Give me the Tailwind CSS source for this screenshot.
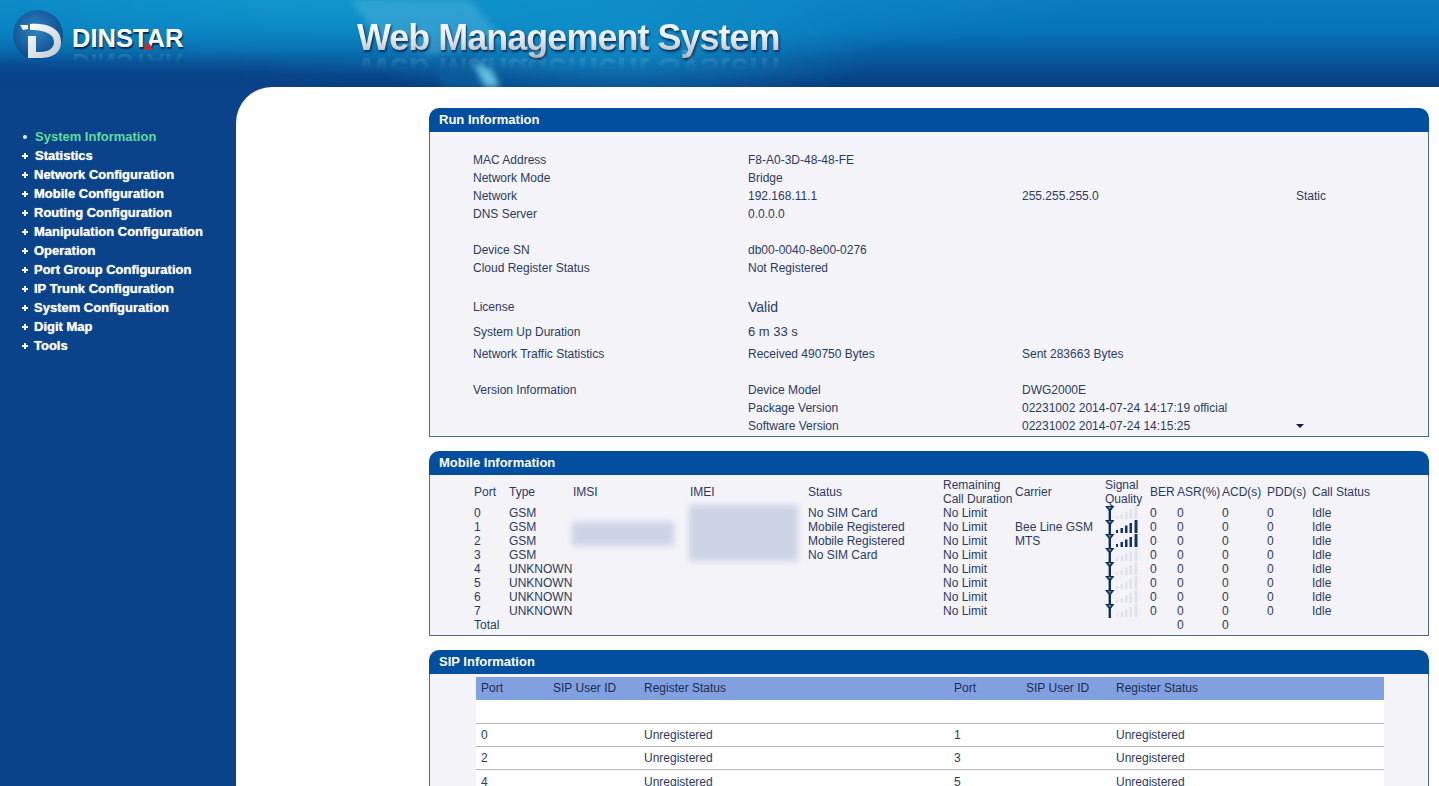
<!DOCTYPE html>
<html>
<head>
<meta charset="UTF-8">
<title>Web Management System</title>
<script src="https://cdn.jsdelivr.net/npm/@tailwindcss/browser@4"></script>
</head>
<body class="h-[786px] overflow-hidden bg-[#0a438a] font-['Liberation_Sans',Arial,sans-serif] text-[12px] text-[#2b3a63]">

<svg class="hidden">
  <symbol id="ant" viewBox="0 0 10 14">
    <path d="M0 0H9.500L6 4.500V14H3.600V4.500Z" fill="#0f3158"/>
    <path d="M3 1.200H6.500L4.800 3Z" fill="#8fa3bb"/>
  </symbol>
  <symbol id="bars" viewBox="0 0 22 14">
    <rect x="0" y="10" width="2" height="3"/>
    <rect x="4.500" y="8" width="2.500" height="5"/>
    <rect x="9" y="5.500" width="2.500" height="7.500"/>
    <rect x="13.500" y="3" width="2.500" height="10"/>
    <rect x="18.500" y="0" width="3" height="13"/>
  </symbol>
</svg>

<!-- banner -->
<header class="relative flex h-[87px] overflow-hidden bg-linear-to-b from-[#0a7cc0] via-[#0674b9] via-35% to-[#083c80]">
  <div class="absolute inset-0 bg-[radial-gradient(ellipse_760px_75px_at_330px_0px,#0f96cc,transparent)]"></div>
  <div class="absolute inset-0 bg-[radial-gradient(ellipse_260px_62px_at_620px_50px,#1296cdaa,transparent)]"></div>
  <svg class="absolute left-[280px] top-0 h-[87px] w-[320px] blur-[3px]" viewBox="0 0 320 87">
    <path d="M70 0H190L225 40 150 55 100 40Z" fill="#6cbfe0" fill-opacity="0.35"/>
    <path d="M150 62L195 55 215 87H165Z" fill="#0c5f9f" fill-opacity="0.7"/>
    <path d="M193 62L212 70 220 87H205Z" fill="#64c0e0"/>
  </svg>
  <div class="absolute bottom-0 left-0 h-[35px] w-[340px] bg-[linear-gradient(to_right,#0a438a_70%,transparent)] [mask-image:linear-gradient(to_bottom,transparent,black)]"></div>

  <div class="relative ml-[13px] mt-[10px] flex h-[50px] w-[220px] items-center">
    <svg width="50" height="50" viewBox="0 0 50 50" class="shrink-0">
      <defs>
        <radialGradient id="orb" cx="0.45" cy="0.4" r="0.6">
          <stop offset="0" stop-color="#2f83bd"/>
          <stop offset="1" stop-color="#0b4c8f"/>
        </radialGradient>
        <linearGradient id="dee" x1="0" y1="0" x2="1" y2="1">
          <stop offset="0" stop-color="#ffffff"/>
          <stop offset="1" stop-color="#bcc7cf"/>
        </linearGradient>
      </defs>
      <circle cx="25" cy="25" r="25" fill="url(#orb)"/>
      <path d="M7 15H15V19L10 20Z" fill="#fff"/>
      <path d="M17 14C30 13 48 16 48 32C48 44 38 48 27 48H15V26H23V42H27C36 42 41 38 41 32C41 23 30 20 17 20Z" fill="url(#dee)"/>
    </svg>
    <span class="ml-[9px] mt-[8px] text-[25.5px] font-bold leading-none text-white [text-shadow:1px_2px_1px_#062a55]">DINSTAR</span>
    <div class="absolute left-[130px] top-[31px] border-x-[5px] border-b-[9px] border-x-transparent border-b-[#b8323c]"></div>
    <span aria-hidden="true" class="absolute left-[59px] top-[39px] scale-y-[-1] text-[25.5px] font-bold leading-none text-white/20 [mask-image:linear-gradient(to_top,black,transparent_55%)]">DINSTAR</span>
  </div>

  <div class="relative ml-[124px] mt-[15px] h-[45px]">
    <h1 class="bg-linear-to-b from-white via-[#e9edf0] to-[#a5aeb6] bg-clip-text text-[36px] font-bold leading-[45px] tracking-[-1px] whitespace-nowrap text-transparent drop-shadow-[1px_2px_1px_#0a2e58]">Web Management System</h1>
    <div aria-hidden="true" class="absolute left-0 top-[33px] scale-y-[-1] text-[36px] font-bold leading-[45px] tracking-[-1px] whitespace-nowrap text-white/20 [mask-image:linear-gradient(to_top,black,transparent_50%)]">Web Management System</div>
  </div>
</header>

<div class="flex h-[699px]">
  <!-- menu -->
  <nav class="w-[236px] shrink-0 pt-[40px] pl-[22px]">
    <ul class="text-[13px] font-bold leading-[19px] text-white [text-shadow:0_0_1px_#cfe0f5]">
      <li class="flex items-center text-[#5fdc9f] [text-shadow:none]"><span class="ml-px mr-[8px] h-[4px] w-[4px] rounded-full bg-[#dff5e8]"></span>System Information</li>
      <li class="flex items-center"><svg class="mr-[7px] h-[6px] w-[6px] fill-white" viewBox="0 0 6 6"><path d="M2 0H4V2H6V4H4V6H2V4H0V2H2Z"/></svg>Statistics</li>
      <li class="flex items-center"><svg class="mr-[6px] h-[6px] w-[6px] fill-white" viewBox="0 0 6 6"><path d="M2 0H4V2H6V4H4V6H2V4H0V2H2Z"/></svg>Network Configuration</li>
      <li class="flex items-center"><svg class="mr-[6px] h-[6px] w-[6px] fill-white" viewBox="0 0 6 6"><path d="M2 0H4V2H6V4H4V6H2V4H0V2H2Z"/></svg>Mobile Configuration</li>
      <li class="flex items-center"><svg class="mr-[6px] h-[6px] w-[6px] fill-white" viewBox="0 0 6 6"><path d="M2 0H4V2H6V4H4V6H2V4H0V2H2Z"/></svg>Routing Configuration</li>
      <li class="flex items-center"><svg class="mr-[6px] h-[6px] w-[6px] fill-white" viewBox="0 0 6 6"><path d="M2 0H4V2H6V4H4V6H2V4H0V2H2Z"/></svg>Manipulation Configuration</li>
      <li class="flex items-center"><svg class="mr-[6px] h-[6px] w-[6px] fill-white" viewBox="0 0 6 6"><path d="M2 0H4V2H6V4H4V6H2V4H0V2H2Z"/></svg>Operation</li>
      <li class="flex items-center"><svg class="mr-[6px] h-[6px] w-[6px] fill-white" viewBox="0 0 6 6"><path d="M2 0H4V2H6V4H4V6H2V4H0V2H2Z"/></svg>Port Group Configuration</li>
      <li class="flex items-center"><svg class="mr-[6px] h-[6px] w-[6px] fill-white" viewBox="0 0 6 6"><path d="M2 0H4V2H6V4H4V6H2V4H0V2H2Z"/></svg>IP Trunk Configuration</li>
      <li class="flex items-center"><svg class="mr-[6px] h-[6px] w-[6px] fill-white" viewBox="0 0 6 6"><path d="M2 0H4V2H6V4H4V6H2V4H0V2H2Z"/></svg>System Configuration</li>
      <li class="flex items-center"><svg class="mr-[6px] h-[6px] w-[6px] fill-white" viewBox="0 0 6 6"><path d="M2 0H4V2H6V4H4V6H2V4H0V2H2Z"/></svg>Digit Map</li>
      <li class="flex items-center"><svg class="mr-[6px] h-[6px] w-[6px] fill-white" viewBox="0 0 6 6"><path d="M2 0H4V2H6V4H4V6H2V4H0V2H2Z"/></svg>Tools</li>
    </ul>
  </nav>

  <main class="min-w-0 flex-1 overflow-hidden rounded-tl-[36px] bg-white pl-[193px] pr-[10px] pt-[21px]">

    <!-- run information -->
    <section class="mb-[14px]">
      <h2 class="h-[24px] rounded-t-[10px] bg-[#014f9e] pl-[10px] text-[13px] font-bold leading-[23px] text-white">Run Information</h2>
      <div class="relative h-[305px] border-x border-b border-[#4d6a8c] bg-[#f4f4f8] pl-[43px] pt-[19px]">
        <div class="grid grid-cols-[275px_274px_274px_1fr] leading-[18px]">
          <div>MAC Address</div><div>F8-A0-3D-48-48-FE</div><div></div><div></div>
          <div>Network Mode</div><div>Bridge</div><div></div><div></div>
          <div>Network</div><div>192.168.11.1</div><div>255.255.255.0</div><div>Static</div>
          <div>DNS Server</div><div>0.0.0.0</div><div></div><div></div>
          <div class="col-span-4 h-[18px]"></div>
          <div>Device SN</div><div>db00-0040-8e00-0276</div><div></div><div></div>
          <div>Cloud Register Status</div><div>Not Registered</div><div></div><div></div>
          <div class="col-span-4 h-[21px]"></div>
          <div>License</div><div class="text-[14px]">Valid</div><div></div><div></div>
          <div class="col-span-4 h-[7px]"></div>
          <div>System Up Duration</div><div class="text-[13px]">6 m 33 s</div><div></div><div></div>
          <div class="col-span-4 h-[4px]"></div>
          <div>Network Traffic Statistics</div><div>Received 490750 Bytes</div><div>Sent 283663 Bytes</div><div></div>
          <div class="col-span-4 h-[18px]"></div>
          <div>Version Information</div><div>Device Model</div><div>DWG2000E</div><div></div>
          <div></div><div>Package Version</div><div>02231002 2014-07-24 14:17:19 official</div><div></div>
          <div></div><div>Software Version</div><div>02231002 2014-07-24 14:15:25</div><div></div>
        </div>
        <div class="absolute left-[866px] top-[292px] border-x-[4px] border-t-[4px] border-x-transparent border-t-[#1a1560]"></div>
      </div>
    </section>

    <!-- mobile information -->
    <section class="mb-[14px]">
      <h2 class="h-[24px] rounded-t-[10px] bg-[#014f9e] pl-[10px] text-[13px] font-bold leading-[23px] text-white">Mobile Information</h2>
      <div class="relative h-[161px] border-x border-b border-[#4d6a8c] bg-[#f4f4f8] pl-[44px] pt-[3px]">
        <div class="grid grid-cols-[35px_64px_117px_118px_135px_72px_90px_45px_27px_45px_45px_45px_1fr] leading-[14px]">
          <div class="self-center">Port</div><div class="self-center">Type</div><div class="self-center">IMSI</div><div class="self-center">IMEI</div><div class="self-center">Status</div><div>Remaining<br>Call Duration</div><div class="self-center">Carrier</div><div>Signal<br>Quality</div><div class="self-center">BER</div><div class="self-center">ASR(%)</div><div class="self-center">ACD(s)</div><div class="self-center">PDD(s)</div><div class="self-center whitespace-nowrap">Call Status</div>

          <div>0</div><div>GSM</div><div></div><div></div><div>No SIM Card</div><div>No Limit</div><div></div>
          <div class="flex"><svg class="h-[14px] w-[10px]"><use href="#ant"/></svg><svg class="ml-px h-[14px] w-[22px] fill-[#dfe3ea]"><use href="#bars"/></svg></div><div>0</div><div>0</div><div>0</div><div>0</div><div>Idle</div>

          <div>1</div><div>GSM</div><div></div><div></div><div>Mobile Registered</div><div>No Limit</div><div>Bee Line GSM</div>
          <div class="flex"><svg class="h-[14px] w-[10px]"><use href="#ant"/></svg><svg class="ml-px h-[14px] w-[22px] fill-[#10355f]"><use href="#bars"/></svg></div><div>0</div><div>0</div><div>0</div><div>0</div><div>Idle</div>

          <div>2</div><div>GSM</div><div></div><div></div><div>Mobile Registered</div><div>No Limit</div><div>MTS</div>
          <div class="flex"><svg class="h-[14px] w-[10px]"><use href="#ant"/></svg><svg class="ml-px h-[14px] w-[22px] fill-[#10355f]"><use href="#bars"/></svg></div><div>0</div><div>0</div><div>0</div><div>0</div><div>Idle</div>

          <div>3</div><div>GSM</div><div></div><div></div><div>No SIM Card</div><div>No Limit</div><div></div>
          <div class="flex"><svg class="h-[14px] w-[10px]"><use href="#ant"/></svg><svg class="ml-px h-[14px] w-[22px] fill-[#dfe3ea]"><use href="#bars"/></svg></div><div>0</div><div>0</div><div>0</div><div>0</div><div>Idle</div>

          <div>4</div><div>UNKNOWN</div><div></div><div></div><div></div><div>No Limit</div><div></div>
          <div class="flex"><svg class="h-[14px] w-[10px]"><use href="#ant"/></svg><svg class="ml-px h-[14px] w-[22px] fill-[#dfe3ea]"><use href="#bars"/></svg></div><div>0</div><div>0</div><div>0</div><div>0</div><div>Idle</div>

          <div>5</div><div>UNKNOWN</div><div></div><div></div><div></div><div>No Limit</div><div></div>
          <div class="flex"><svg class="h-[14px] w-[10px]"><use href="#ant"/></svg><svg class="ml-px h-[14px] w-[22px] fill-[#dfe3ea]"><use href="#bars"/></svg></div><div>0</div><div>0</div><div>0</div><div>0</div><div>Idle</div>

          <div>6</div><div>UNKNOWN</div><div></div><div></div><div></div><div>No Limit</div><div></div>
          <div class="flex"><svg class="h-[14px] w-[10px]"><use href="#ant"/></svg><svg class="ml-px h-[14px] w-[22px] fill-[#dfe3ea]"><use href="#bars"/></svg></div><div>0</div><div>0</div><div>0</div><div>0</div><div>Idle</div>

          <div>7</div><div>UNKNOWN</div><div></div><div></div><div></div><div>No Limit</div><div></div>
          <div class="flex"><svg class="h-[14px] w-[10px]"><use href="#ant"/></svg><svg class="ml-px h-[14px] w-[22px] fill-[#dfe3ea]"><use href="#bars"/></svg></div><div>0</div><div>0</div><div>0</div><div>0</div><div>Idle</div>

          <div>Total</div><div></div><div></div><div></div><div></div><div></div><div></div><div></div><div></div><div>0</div><div>0</div><div></div><div></div>
        </div>
        <!-- blurred-out IMSI / IMEI -->
        <div class="absolute left-[142px] top-[47px] h-[24px] w-[102px] bg-[#ccd3e5] blur-[3px]"></div>
        <div class="absolute left-[259px] top-[30px] h-[56px] w-[109px] bg-[#ccd3e5] blur-[3px]"></div>
      </div>
    </section>

    <!-- sip information -->
    <section>
      <h2 class="h-[24px] rounded-t-[10px] bg-[#014f9e] pl-[10px] text-[13px] font-bold leading-[23px] text-white">SIP Information</h2>
      <div class="h-[112px] border-x border-[#4d6a8c] bg-[#f4f4f8] pl-[46px] pr-[44px] pt-[3px]">
        <div class="bg-white">
          <div class="grid h-[23px] grid-cols-[72px_91px_310px_72px_90px_1fr] items-center bg-[#80a0e0] pb-px pl-[5px] text-[#1f2c52]">
            <div>Port</div><div>SIP User ID</div><div>Register Status</div><div>Port</div><div>SIP User ID</div><div>Register Status</div>
          </div>
          <div class="h-[24px] border-b border-[#b5b5b5]"></div>
          <div class="grid h-[23px] grid-cols-[72px_91px_310px_72px_90px_1fr] items-center border-b border-[#b5b5b5] pl-[5px]">
            <div>0</div><div></div><div>Unregistered</div><div>1</div><div></div><div>Unregistered</div>
          </div>
          <div class="grid h-[23px] grid-cols-[72px_91px_310px_72px_90px_1fr] items-center border-b border-[#b5b5b5] pl-[5px]">
            <div>2</div><div></div><div>Unregistered</div><div>3</div><div></div><div>Unregistered</div>
          </div>
          <div class="grid h-[23px] grid-cols-[72px_91px_310px_72px_90px_1fr] items-center pl-[5px]">
            <div>4</div><div></div><div>Unregistered</div><div>5</div><div></div><div>Unregistered</div>
          </div>
        </div>
      </div>
    </section>
  </main>
</div>
</body>
</html>
